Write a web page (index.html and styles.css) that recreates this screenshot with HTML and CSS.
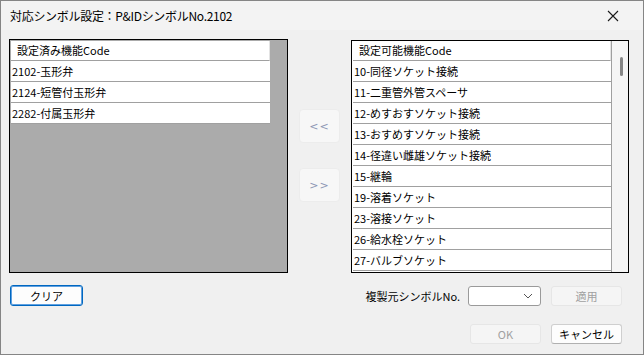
FILE: index.html
```html
<!DOCTYPE html>
<html lang="ja">
<head>
    <meta charset="UTF-8">
    <title>対応シンボル設定</title>
    <link rel="stylesheet" href="styles.css">
</head>
<body>
    <div class="window">
        <div class="titlebar">
            <span class="title">対応シンボル設定：P&amp;IDシンボルNo.2102</span>
            <svg class="close" width="12" height="12" viewBox="0 0 12 12">
                <path d="M1 1 L11 11 M11 1 L1 11" stroke="#1a1a1a" stroke-width="1.1" fill="none"/>
            </svg>
        </div>
        <div class="main">
            <div class="listbox left-list">
                <div class="list-header">設定済み機能Code</div>
                <div class="list-row">2102-玉形弁</div>
                <div class="list-row">2124-短管付玉形弁</div>
                <div class="list-row">2282-付属玉形弁</div>
            </div>
            <div class="movers">
                <button class="move-btn move-left">&lt;&lt;</button>
                <button class="move-btn move-right">&gt;&gt;</button>
            </div>
            <div class="listbox right-list">
                <div class="rows">
                    <div class="list-header">設定可能機能Code</div>
                    <div class="list-row">10-同径ソケット接続</div>
                    <div class="list-row">11-二重管外管スペーサ</div>
                    <div class="list-row">12-めすおすソケット接続</div>
                    <div class="list-row">13-おすめすソケット接続</div>
                    <div class="list-row">14-径違い雌雄ソケット接続</div>
                    <div class="list-row">15-継輪</div>
                    <div class="list-row">19-溶着ソケット</div>
                    <div class="list-row">23-溶接ソケット</div>
                    <div class="list-row">26-給水栓ソケット</div>
                    <div class="list-row">27-バルブソケット</div>
                    <div class="list-row"></div>
                </div>
                <div class="scrollbar"><div class="thumb"></div></div>
            </div>
        </div>
        <div class="footer-row first-row">
            <button class="btn clear-btn">クリア</button>
            <div class="spacer"></div>
            <span class="field-label">複製元シンボルNo.</span>
            <div class="combo">
                <svg width="10" height="6" viewBox="0 0 10 6">
                    <path d="M1 1 L5 5 L9 1" stroke="#555" stroke-width="1" fill="none"/>
                </svg>
            </div>
            <button class="btn disabled">適用</button>
        </div>
        <div class="footer-row second-row">
            <div class="spacer"></div>
            <button class="btn disabled">OK</button>
            <button class="btn cancel-btn">キャンセル</button>
        </div>
    </div>
</body>
</html>
```
FILE: styles.css
```css
* {
    box-sizing: border-box;
}

body {
    margin: 0;
    background-color: #f0f0f0;
    font-family: "Noto Sans CJK JP", "Noto Sans", sans-serif;
    color: #000;
}

.window {
    width: 644px;
    height: 355px;
    border: 1px solid #858585;
    background-color: #f0f0f0;
    overflow: hidden;
}

.titlebar {
    height: 29px;
    background-color: #f3f3f3;
    display: flex;
    align-items: center;
    padding-left: 9px;
    padding-right: 24px;
}

.title {
    font-size: 12px;
    letter-spacing: -0.3px;
    flex: 1;
}

.close {
    display: block;
}

.main {
    display: flex;
    padding: 9px 0 0 8px;
    height: 243px;
}

.listbox {
    border: 1px solid #000;
    background-color: #ababab;
    padding: 1px;
    font-size: 11px;
}

.left-list {
    width: 279px;
    height: 234px;
}

.list-header {
    width: 259px;
    height: 20px;
    line-height: 19px;
    background-color: #fff;
    padding-left: 6px;
    border-right: 1px solid #e3e3e3;
    border-bottom: 1px solid #a0a0a0;
}

.list-row {
    width: 259px;
    height: 21px;
    line-height: 20px;
    background-color: #fff;
    padding-left: 1px;
    border-bottom: 1px solid #a0a0a0;
    white-space: nowrap;
}

.movers {
    width: 63px;
    display: flex;
    flex-direction: column;
    padding: 70px 0 0 11px;
    gap: 25px;
}

.move-btn {
    width: 41px;
    height: 34px;
    border: 1px solid #ececec;
    border-radius: 4px;
    background-color: #f7f7f7;
    color: #8c96b4;
    font-family: "DejaVu Sans", sans-serif;
    font-size: 11px;
    letter-spacing: 1px;
    padding: 0;
}

.right-list {
    width: 278px;
    height: 233px;
    margin-top: 1px;
    display: flex;
    background-color: #fff;
    padding: 0 0 0 1px;
    overflow: hidden;
}

.rows {
    width: 259px;
    border-right: 1px solid #a0a0a0;
}

.rows .list-header,
.rows .list-row {
    width: 258px;
}

.scrollbar {
    flex: 1;
    background-color: #f5f5f5;
    position: relative;
}

.thumb {
    position: absolute;
    left: 8px;
    top: 16px;
    width: 3px;
    height: 19px;
    border-radius: 2px;
    background-color: #858585;
}

.footer-row {
    display: flex;
    align-items: center;
    padding: 0 21px 0 9px;
}

.first-row {
    margin-top: 12px;
    height: 21px;
}

.second-row {
    margin-top: 18px;
    height: 20px;
}

.spacer {
    flex: 1;
}

.btn {
    width: 71px;
    height: 20px;
    border-radius: 3px;
    font-family: "Noto Sans CJK JP", sans-serif;
    font-size: 11px;
    padding: 0;
    line-height: 18px;
}

.clear-btn {
    width: 73px;
    height: 21px;
    background-color: #fdfdfd;
    border: 1px solid #0067c0;
    box-shadow: inset 0 0 0 1px #5fa0e0;
}

.field-label {
    font-size: 11px;
    margin-right: 8px;
}

.combo {
    width: 73px;
    height: 20px;
    background-color: #fff;
    border: 1px solid #9a9a9a;
    border-radius: 3px;
    display: flex;
    justify-content: flex-end;
    align-items: center;
    padding-right: 7px;
    margin-right: 10px;
}

.disabled {
    background-color: #f5f5f5;
    border: 1px solid #e6e6e6;
    color: #a0a0a0;
}

.second-row .disabled {
    margin-right: 10px;
}

.cancel-btn {
    background-color: #fdfdfd;
    border: 1px solid #cfcfcf;
    border-bottom-color: #b0b0b0;
}
```
